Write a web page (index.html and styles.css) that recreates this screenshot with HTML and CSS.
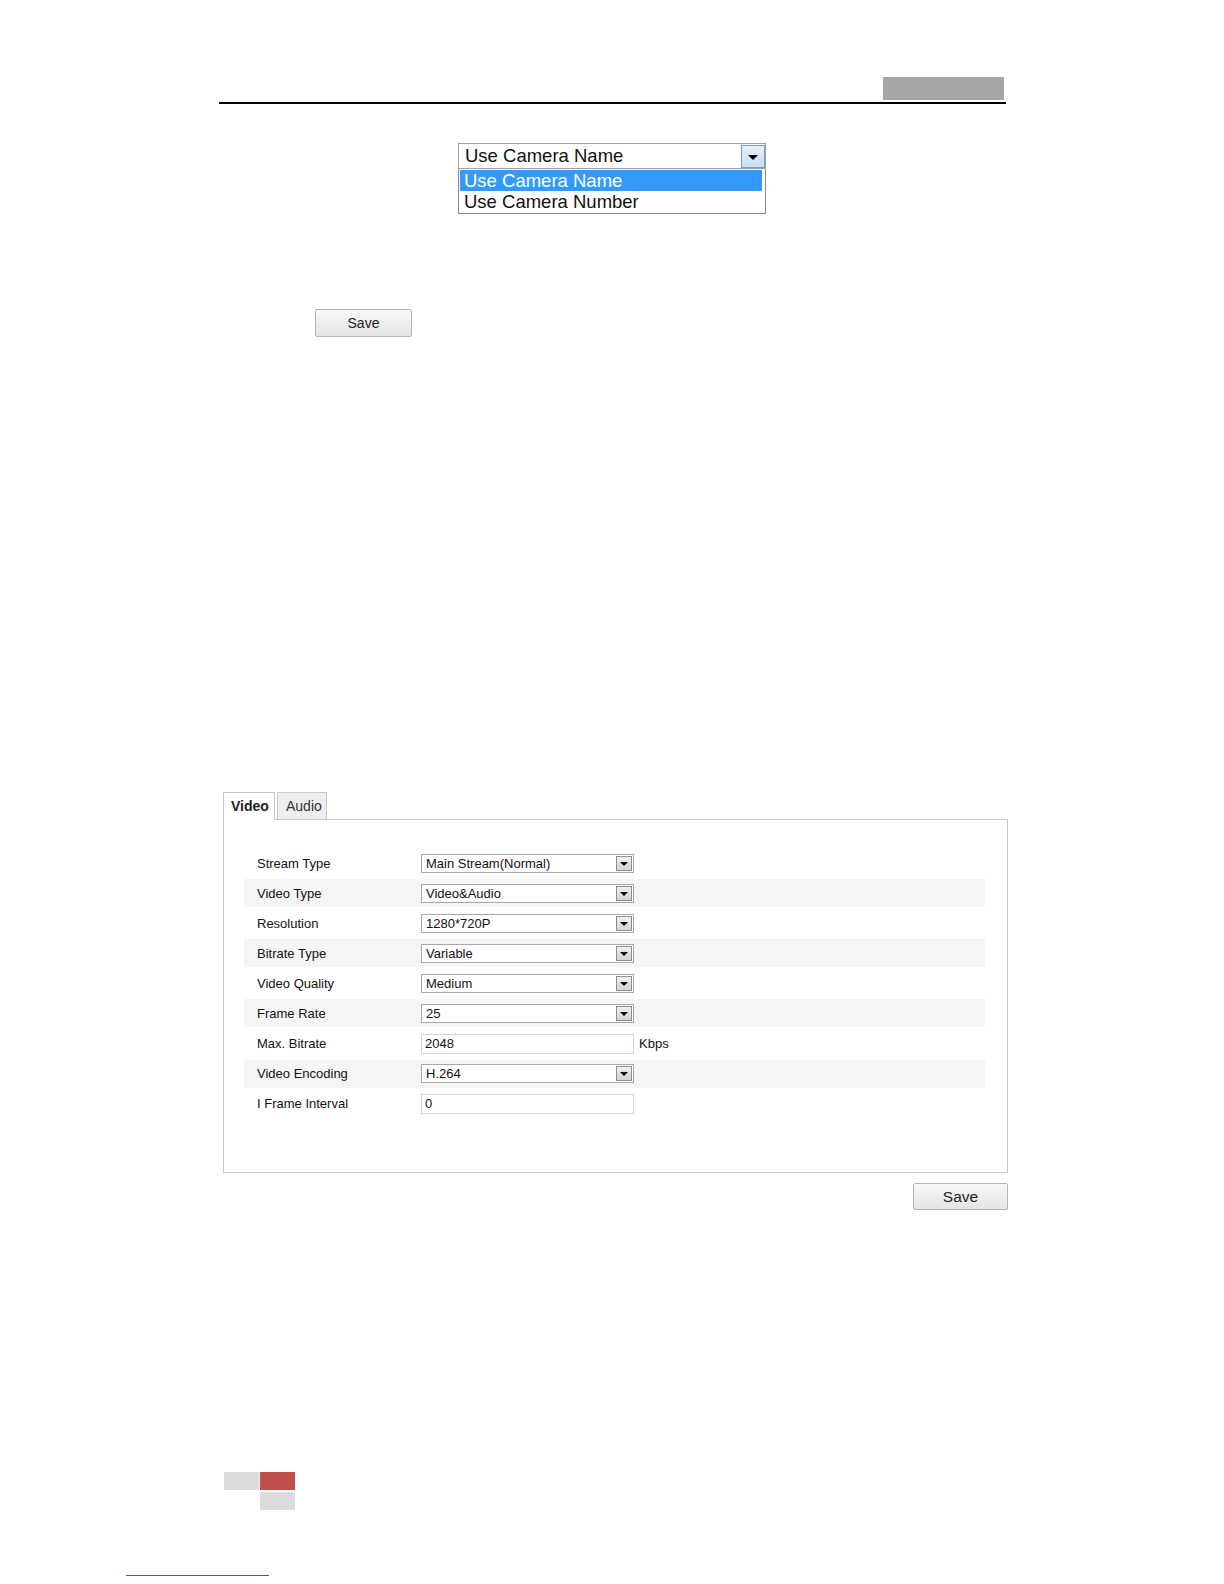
FILE: index.html
```html
<!DOCTYPE html>
<html>
<head>
<meta charset="utf-8">
<link rel="stylesheet" href="styles.css">
</head>
<body>
<div class="page">
  <div class="header">
    <div class="header-tag"></div>
  </div>

  <div class="combo-wrap">
    <div class="combo">
      <div class="combo-field">
        <span class="combo-text">Use Camera Name</span>
        <span class="combo-btn"><span class="tri-big"></span></span>
      </div>
      <div class="combo-list">
        <div class="combo-opt sel">Use Camera Name</div>
        <div class="combo-opt">Use Camera Number</div>
      </div>
    </div>
  </div>

  <div class="save1-wrap"><button class="btn btn-small">Save</button></div>

  <div class="config">
    <div class="tabs">
      <div class="tab active">Video</div>
      <div class="tab">Audio</div>
    </div>
    <div class="panel">
      <div class="row"><span class="label">Stream Type</span><div class="sel-box"><span>Main Stream(Normal)</span><span class="arrow"><span class="tri"></span></span></div></div>
      <div class="row alt"><span class="label">Video Type</span><div class="sel-box"><span>Video&amp;Audio</span><span class="arrow"><span class="tri"></span></span></div></div>
      <div class="row"><span class="label">Resolution</span><div class="sel-box"><span>1280*720P</span><span class="arrow"><span class="tri"></span></span></div></div>
      <div class="row alt"><span class="label">Bitrate Type</span><div class="sel-box"><span>Variable</span><span class="arrow"><span class="tri"></span></span></div></div>
      <div class="row"><span class="label">Video Quality</span><div class="sel-box"><span>Medium</span><span class="arrow"><span class="tri"></span></span></div></div>
      <div class="row alt"><span class="label">Frame Rate</span><div class="sel-box"><span>25</span><span class="arrow"><span class="tri"></span></span></div></div>
      <div class="row"><span class="label">Max. Bitrate</span><div class="txt-box">2048</div><span class="unit">Kbps</span></div>
      <div class="row alt"><span class="label">Video Encoding</span><div class="sel-box"><span>H.264</span><span class="arrow"><span class="tri"></span></span></div></div>
      <div class="row"><span class="label">I Frame Interval</span><div class="txt-box">0</div></div>
    </div>
    <div class="save2-wrap"><button class="btn btn-big">Save</button></div>
  </div>

  <div class="footer-marks">
    <div class="mark-col">
      <div class="mark gray"></div>
    </div>
    <div class="mark-col">
      <div class="mark red"></div>
      <div class="mark gray"></div>
    </div>
  </div>

  <div class="foot-line"></div>
</div>
</body>
</html>
```

FILE: styles.css
```css
html, body {
  margin: 0;
  padding: 0;
  background: #ffffff;
  overflow: hidden;
}
body {
  font-family: "Liberation Sans", Arial, sans-serif;
  color: #000;
}
.page {
  width: 1224px;
  height: 1584px;
  overflow: hidden;
  display: flow-root;
}
.header {
  margin: 77px 0 0 219px;
  width: 787px;
  height: 25px;
  border-bottom: 2px solid #000;
  display: flex;
  justify-content: flex-end;
  align-items: flex-start;
}
.header-tag {
  width: 121px;
  height: 23px;
  background: #a6a6a6;
  margin-right: 2px;
}

/* combo */
.combo-wrap {
  margin: 39px 0 0 458px;
}
.combo {
  width: 308px;
}
.combo-field {
  height: 24px;
  border: 1px solid #a0a0a0;
  display: flex;
  align-items: center;
  justify-content: space-between;
  background: #fff;
}
.combo-text {
  font-size: 18.5px;
  padding-left: 6px;
  color: #111;
}
.combo-btn {
  width: 24px;
  height: 23px;
  border: 1px solid #7a9ccc;
  background: linear-gradient(#e8f2fb, #c4ddf3);
  display: flex;
  align-items: center;
  justify-content: center;
  box-sizing: border-box;
}
.tri-big {
  width: 0;
  height: 0;
  border-left: 5px solid transparent;
  border-right: 5px solid transparent;
  border-top: 5px solid #000;
  margin-top: 2px;
}
.combo-list {
  width: 305px;
  border: 1px solid #8a8a8a;
  border-top: none;
  padding: 1px 0 1px 1px;
}
.combo-opt {
  height: 21px;
  line-height: 21px;
  font-size: 18.5px;
  padding-left: 4px;
  color: #111;
}
.combo-opt.sel {
  background: #3399ff;
  color: #fff;
  width: 298px;
}

/* save 1 */
.save1-wrap {
  margin: 95px 0 0 315px;
}
.btn {
  font-family: "Liberation Sans", Arial, sans-serif;
  border: 1px solid #b4b4b4;
  border-radius: 2px;
  background: linear-gradient(#f8f8f8, #e4e4e4);
  color: #222;
  padding: 0;
  display: block;
}
.btn-small {
  width: 97px;
  height: 28px;
  font-size: 14px;
}
.btn-big {
  width: 95px;
  height: 27px;
  font-size: 15.5px;
}

/* config */
.config {
  margin: 455px 0 0 223px;
  width: 785px;
}
.tabs {
  display: flex;
  gap: 2px;
  height: 27px;
  position: relative;
  z-index: 1;
}
.tab {
  height: 27px;
  box-sizing: border-box;
  border: 1px solid #c8c8c8;
  border-bottom: none;
  font-size: 14px;
  line-height: 27px;
  padding: 0 0 0 8px;
  width: 50px;
  background: #eeeeee;
  color: #333;
}
.tab.active {
  background: #fff;
  font-weight: bold;
  color: #222;
  height: 28px;
  width: 52px;
  padding-left: 7px;
}
.panel {
  border: 1px solid #c8c8c8;
  height: 323px;
  padding: 29px 22px 0 20px;
  box-sizing: content-box;
  width: 741px;
}
.row {
  height: 28px;
  margin-bottom: 2.1px;
  display: flex;
  align-items: center;
  font-size: 13px;
  color: #111;
}
.row.alt {
  background: #f5f5f5;
}
.label {
  width: 177px;
  box-sizing: border-box;
  padding-left: 13px;
}
.sel-box {
  width: 213px;
  height: 19px;
  border: 1px solid #a8a8a8;
  box-sizing: border-box;
  background: #fff;
  display: flex;
  align-items: center;
  justify-content: space-between;
  padding-left: 4px;
  font-size: 13px;
}
.arrow {
  width: 16px;
  height: 15px;
  margin-right: 1px;
  border: 1px solid #8c8c8c;
  box-sizing: border-box;
  background: linear-gradient(#f0f0f0, #d4d4d4);
  display: flex;
  align-items: center;
  justify-content: center;
}
.tri {
  width: 0;
  height: 0;
  border-left: 4px solid transparent;
  border-right: 4px solid transparent;
  border-top: 4px solid #000;
  margin-top: 1px;
}
.txt-box {
  width: 213px;
  height: 20px;
  box-sizing: border-box;
  border: 1px solid #d4d4d4;
  background: #fff;
  padding-left: 3px;
  line-height: 18px;
  font-size: 13px;
}
.unit {
  margin-left: 5px;
}
.save2-wrap {
  display: flex;
  justify-content: flex-end;
  margin-top: 10px;
}

/* footer */
.footer-marks {
  margin: 262px 0 0 224px;
  display: flex;
  gap: 1px;
}
.mark-col {
  display: flex;
  flex-direction: column;
  gap: 2px;
}
.mark {
  width: 35px;
  height: 18px;
}
.mark.gray {
  background: #dcdcdc;
}
.mark.red {
  background: #c0504d;
}
.foot-line {
  margin: 65px 0 0 126px;
  width: 143px;
  height: 1px;
  background: #3a56c8;
}
```
